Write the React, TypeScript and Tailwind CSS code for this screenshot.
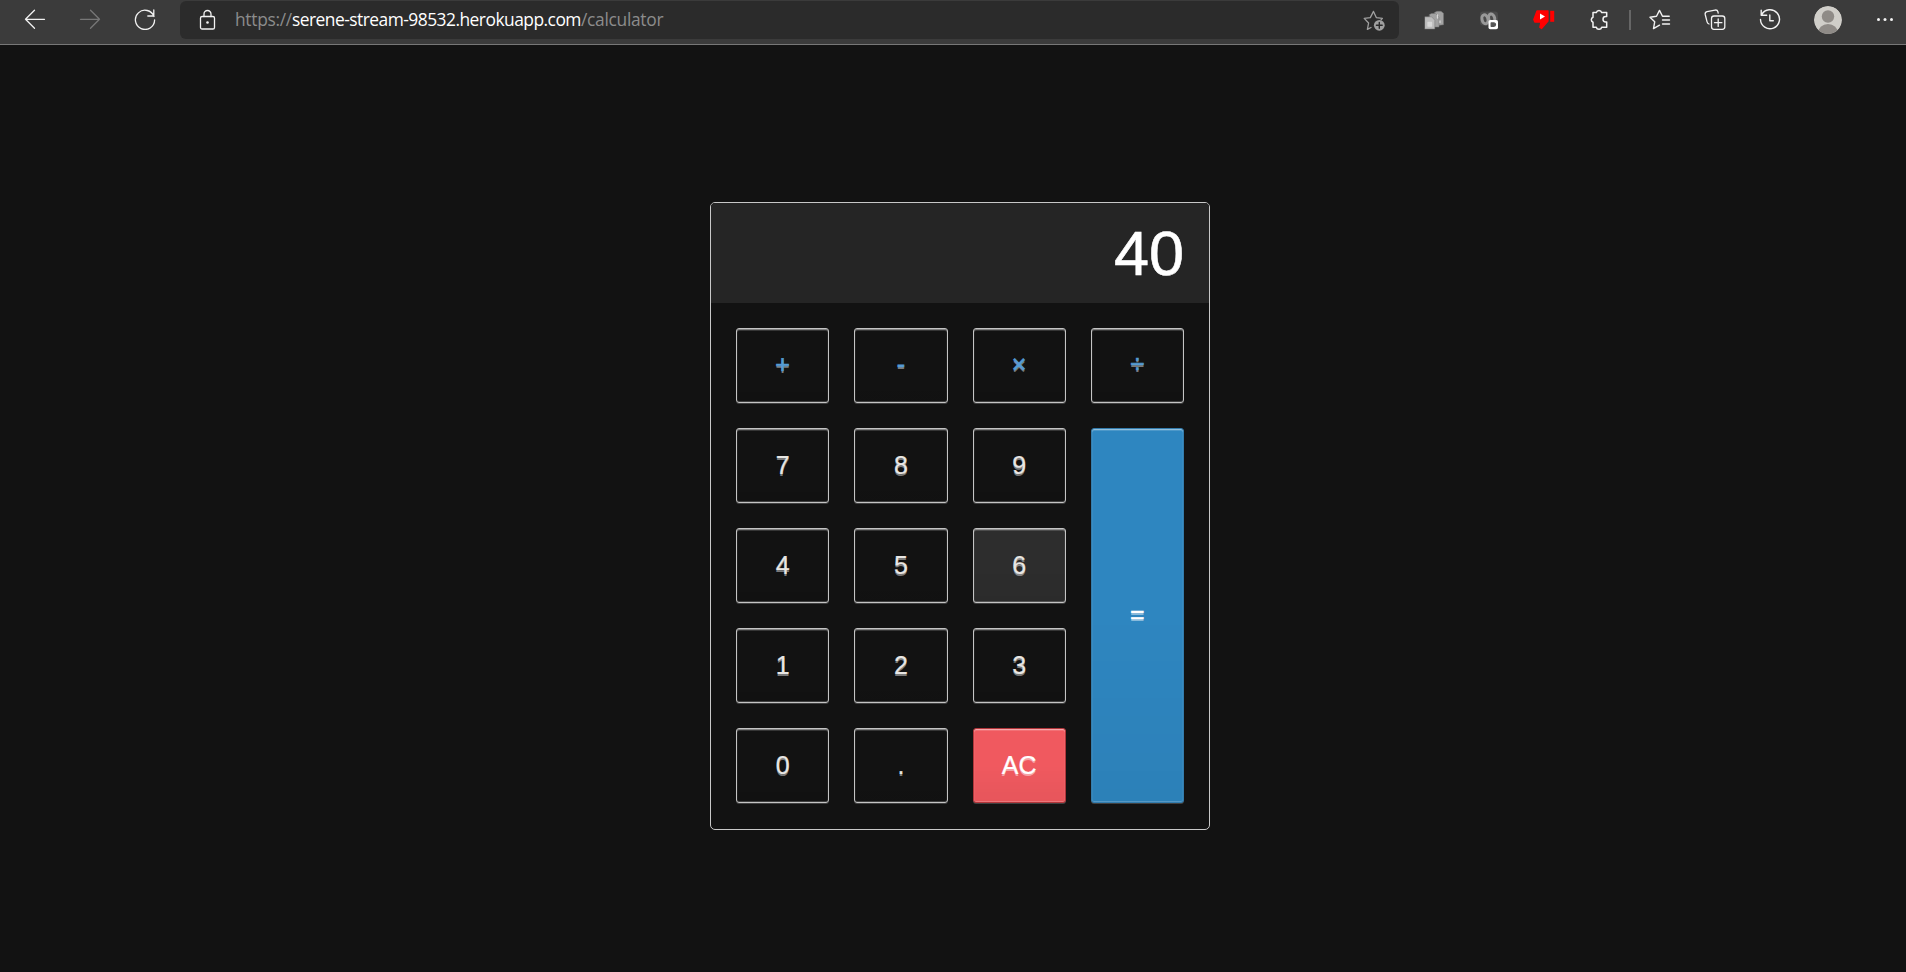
import React from "react";

type Kind = "digit" | "operator" | "hover" | "clear" | "equal";

const keyBase =
  "rounded-[3px] border text-[25px] flex items-center justify-center bg-linear-to-b from-transparent from-50% to-black/4 [text-shadow:0_1.5px_rgba(255,255,255,0.45)] shadow-[inset_0_0_0_1px_rgba(255,255,255,0.05),inset_0_1px_0_0_rgba(255,255,255,0.35),inset_0_2px_0_0_rgba(255,255,255,0.15),inset_0_-1px_0_0_rgba(255,255,255,0.15),0_1px_0_0_rgba(255,255,255,0.2)]";

const kinds: Record<Kind, string> = {
  digit: "border-[#c4c4c4] text-[#e8e6e3] [-webkit-text-stroke:0.2px]",
  operator: "border-[#c4c4c4] text-[#559bd4] pb-px [-webkit-text-stroke:0.7px]",
  hover: "border-[#c4c4c4] bg-[#2d2d2d] text-[#e8e6e3] [-webkit-text-stroke:0.2px]",
  clear: "border-[#b0353a] bg-[#f0595f] text-white [-webkit-text-stroke:0.2px]",
  equal: "border-[#337cac] bg-[#2e86c0] text-white col-start-4 row-start-2 row-span-4 pb-px [-webkit-text-stroke:0.4px]",
};

const keys: [string, Kind][] = [
  ["+", "operator"], ["-", "operator"], ["×", "operator"], ["÷", "operator"],
  ["7", "digit"], ["8", "digit"], ["9", "digit"],
  ["4", "digit"], ["5", "digit"], ["6", "hover"],
  ["1", "digit"], ["2", "digit"], ["3", "digit"],
  ["0", "digit"], [".", "digit"], ["AC", "clear"],
  ["=", "equal"],
];

function Icon({ className, children }: { className: string; children: React.ReactNode }) {
  return (
    <svg
      viewBox="0 0 22 22"
      fill="none"
      stroke="currentColor"
      strokeWidth="1.3"
      strokeLinejoin="round"
      strokeLinecap="round"
      className={`size-[22px] shrink-0 ${className}`}
    >
      {children}
    </svg>
  );
}

function Toolbar() {
  return (
    <header className="flex h-[45px] shrink-0 items-start border-b border-[#777] bg-[#3b3b3b] text-[#f2f2f2]">
      <Icon className="mt-2 ml-6">
        <path d="M20.5 11.3H1.5M10.5 2.3l-9 9 9 9" />
      </Icon>
      <Icon className="mt-2 ml-[33px] text-[#777]">
        <path d="M1.5 11.3h19M11.5 2.3l9 9-9 9" />
      </Icon>
      <Icon className="mt-2 ml-[33px]">
        <path d="M20 8.5A9.6 9.6 0 1 0 20.6 12M19.8 2v6h-6" />
      </Icon>
      <div className="mt-px ml-[24px] flex h-[38px] w-[1219px] items-start rounded-[6px] bg-[#2b2b2b]">
        <Icon className="mt-2 ml-4">
          <rect x="4.5" y="7.5" width="14" height="12.5" rx="1.6" />
          <path d="M8 7.5V5a3.5 3.5 0 0 1 7 0v2.5" />
          <circle cx="11.5" cy="13.5" r="1.3" fill="currentColor" stroke="none" />
        </Icon>
        <div className="ml-[17px] grow pt-[5px] font-['Open_Sans',sans-serif] text-[17.4px] leading-[26px] tracking-[-0.3px] whitespace-nowrap text-[#8c8c8c]">
          https://<span className="tracking-[-0.52px] text-white">serene-stream-98532.herokuapp.com</span>/calculator
        </div>
        <Icon className="mt-2 mr-[14px] text-[#a0a0a0]">
          <path d="M8 18.5l-3.6 1.9 1.2-6.4L1.2 9.4l6.1-.8L10.5 2.4l2.8 6.2 6.1.8-1.3 1.3" />
          <circle cx="16.3" cy="16.3" r="5.4" fill="#a0a0a0" stroke="none" />
          <path d="M16.3 13.4v5.8M13.4 16.3h5.8" stroke="#2b2b2b" strokeWidth="1.4" />
        </Icon>
      </div>
      <Icon className="mt-2 ml-[24px]">
        <g stroke="#777" strokeWidth=".5">
          <path d="M11.5 4.5l2.5-1.2h4l2.5 2v11.4l-8 1z" fill="#a2a2a2" />
          <path d="M6.5 6.5l2-1h4l3.5 3.5v10h-9z" fill="#a2a2a2" />
          <path d="M2 8.8h6.5l3.3 3.4V21H2z" fill="#bdbdbd" />
        </g>
        <path d="M5 14.5h3.5v3.5H5z" stroke="#d8d8d8" fill="#d8d8d8" />
        <path d="M14.5 7v3M17 13v1.5" stroke="#d8d8d8" />
      </Icon>
      <Icon className="mt-2 ml-[33px]">
        <rect x="2" y="3.5" width="18" height="14" rx="3" fill="#4b4b4b" stroke="none" />
        <ellipse cx="7" cy="11.3" rx="3" ry="4.6" stroke="#999" strokeWidth="3" transform="rotate(-15 7 11.3)" />
        <ellipse cx="13.7" cy="10.5" rx="3" ry="4.6" stroke="#999" strokeWidth="3" transform="rotate(-15 13.7 10.5)" />
        <rect x="10.5" y="12" width="9.5" height="9.2" rx="1.8" fill="#fff" stroke="none" />
        <path d="M13.2 14.9h2.6a1.7 1.7 0 0 1 0 3.4h-2.6z" fill="#555" stroke="#555" />
      </Icon>
      <Icon className="mt-2 ml-[33px]">
        <path d="M4 3h11v10l-6.5 7.5-1.7-1.2L8 14H1.8L.8 11.5z" fill="#f00" stroke="#f00" />
        <path d="M17.2 2.8h4v11h-4z" fill="#f00" stroke="none" />
        <path d="M7 5.5l5 3-5 3z" fill="#fff" stroke="none" />
      </Icon>
      <Icon className="mt-2 ml-[33px]">
        <path d="M5 4.6h3.3a2.8 2.8 0 0 1 5.4 0h5v3.9h-1a2.7 2.7 0 0 0 0 5.4h1v5.3h-5a2.8 2.8 0 0 1-5.4 0H5v-5a2.7 2.7 0 0 1 0-5z" strokeWidth="1.5" />
      </Icon>
      <div className="mt-[10px] ml-[19px] h-5 w-[2px] bg-[#666]" />
      <Icon className="mt-2 ml-[18px]">
        <path d="M10.5 17.2l-6 3.4 1.2-6.8L1 9.2l6.5-.9L10.5 2.4l3 5.9h6.7M13.5 12h7M13.5 16h7" strokeWidth="1.4" />
      </Icon>
      <Icon className="mt-2 ml-[33px]">
        <rect x="7.5" y="8" width="13.3" height="13.3" rx="2.5" />
        <path d="M14.2 11v7.4M10.5 14.7h7.4M5 16c-1.3-.4-1.8-1.2-2-2.4L1.2 6.5C.9 5 1.5 4.1 3 3.7l8-1.6c1.5-.3 2.5.3 2.9 1.7l.3 1.4" />
      </Icon>
      <Icon className="mt-2 ml-[33px]">
        <path d="M2.7 6.6A9.5 9.5 0 1 1 1.5 11.5M2.2 2.2v5h5.5M10.8 7v5.8h3.5" strokeWidth="1.4" />
      </Icon>
      <svg viewBox="0 0 28 28" className="mt-[6px] ml-[33px] size-7 shrink-0 overflow-hidden rounded-full">
        <circle cx="14" cy="14" r="14" fill="#d0cec9" />
        <circle cx="14" cy="10.5" r="6.2" fill="#8f8b87" />
        <ellipse cx="14" cy="27.5" rx="10.2" ry="9.6" fill="#8f8b87" />
      </svg>
      <Icon className="mt-2 ml-[32px]">
        <g fill="currentColor" stroke="none">
          <circle cx="4.5" cy="11.5" r="1.5" />
          <circle cx="11" cy="11.5" r="1.5" />
          <circle cx="17.5" cy="11.5" r="1.5" />
        </g>
      </Icon>
    </header>
  );
}

export default function App() {
  return (
    <div className="flex h-[972px] w-[1906px] flex-col overflow-hidden bg-[#121212] font-['Liberation_Sans',Arial,sans-serif]">
      <Toolbar />
      <main className="flex grow flex-col items-center pt-[157px] pl-[14px]">
        <section className="flex w-[500px] flex-col overflow-hidden rounded-[5px] border border-[#c8c8c8]">
          <div className="flex h-[100px] items-center justify-end bg-[#252525] px-[25px] text-[63px] text-white [-webkit-text-stroke:0.6px]">
            40
          </div>
          <div className="grid grid-cols-4 grid-rows-[repeat(5,75px)] gap-[25px] p-[25px] pb-[26px]">
            {keys.map(([label, kind]) => (
              <button key={label} className={`${keyBase} ${kinds[kind]}`}>
                {label}
              </button>
            ))}
          </div>
        </section>
      </main>
    </div>
  );
}
